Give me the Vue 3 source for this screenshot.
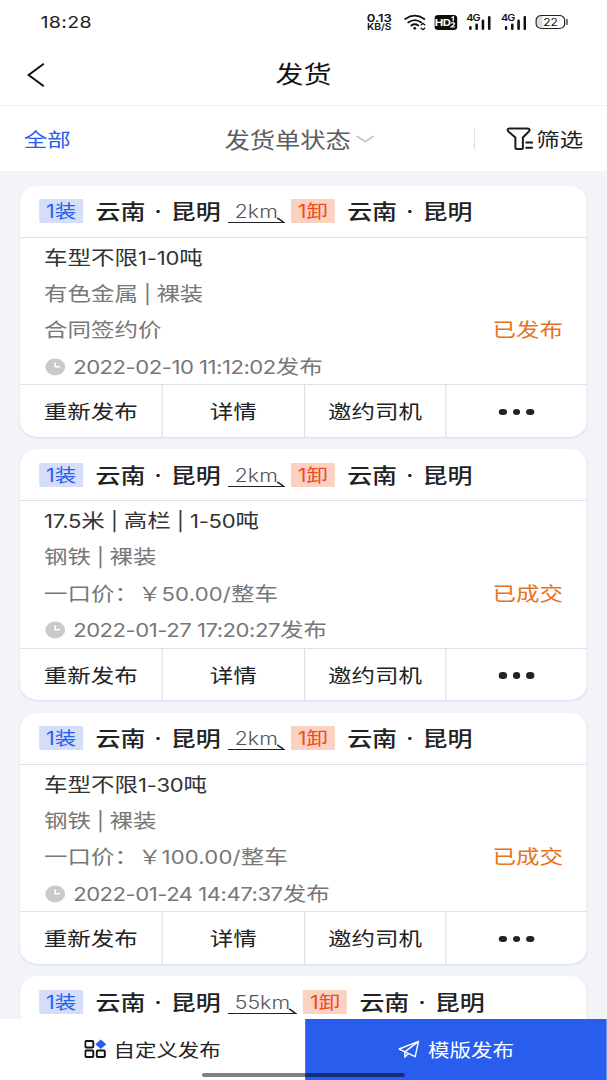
<template>
  <div class="screen">
    <!-- Status bar -->
    <div class="status-bar">
      <span class="clock">18:28</span>
      <div class="status-icons">
        <div class="speed"><span>0.13</span><span>KB/S</span></div>
        <svg class="wifi" viewBox="0 0 23 18" preserveAspectRatio="none">
          <g fill="none" stroke="#111" stroke-width="1.8" stroke-linecap="round">
            <path d="M1.500 6Q11 -0.600 20.500 6" />
            <path d="M4.500 9.400Q11 4.700 17.500 9.400" />
            <path d="M7.500 12.500Q11 10 14.500 12.500" />
          </g>
          <circle cx="11" cy="15.300" r="1.400" fill="#111" />
          <path d="M17 12.300l2.200-2 2.200 2M17 14.700l2.200 2 2.200-2" fill="none" stroke="#111" stroke-width="1.300" />
        </svg>
        <div class="hd">HD<svg viewBox="0 0 5 12">
          <path d="M1.200 1.700L2.700 0.700V5.300M0.900 7.300Q2.500 6 3.700 7.300 4 8.300 1 11H4.300" fill="none" stroke="#fff" stroke-width="1.100" />
        </svg></div>
        <div v-for="sim in 2" :key="sim" class="signal">
          <span>4G</span>
          <svg viewBox="0 0 22 14" preserveAspectRatio="none">
            <path d="M1.300 11.200v1.500M7.600 8.700v4M13.900 4.700v8M20.200 1.300v11.400" fill="none" stroke="#111" stroke-width="2.600" stroke-linecap="round" />
          </svg>
        </div>
        <div class="battery">22</div>
      </div>
    </div>

    <!-- Page header -->
    <header class="page-header">
      <svg class="back" viewBox="0 0 20 26" preserveAspectRatio="none">
        <path d="M17.500 1.800L2.500 13l15 11.200" fill="none" stroke="#111" stroke-width="2" />
      </svg>
      <h1>发货</h1>
    </header>

    <!-- Filters -->
    <div class="filters">
      <span class="filter-all">全部</span>
      <span class="filter-status">
        发货单状态
        <svg viewBox="0 0 20 10" preserveAspectRatio="none">
          <path d="M1.500 2L10 7.500 18.500 2" fill="none" stroke="#c3c8d0" stroke-width="1.900" />
        </svg>
      </span>
      <span class="filter-more">
        <svg viewBox="0 0 28 24" preserveAspectRatio="none">
          <path d="M3.500 1.500H21.500q3.500 0.500 1.500 3L17 10.500v10q0 1.500-1.500 1.500H11q-1.500 0-1.500-1.500v-10L2.500 4.500Q0.500 2 3.500 1.500z" fill="none" stroke="#1c1c1e" stroke-width="2" stroke-linejoin="round" />
          <path d="M19.500 15.500h7.500M19.500 20.700h7.500" stroke="#1c1c1e" stroke-width="2" />
        </svg>
        筛选
      </span>
    </div>

    <!-- Shipment list -->
    <main class="list">
      <section v-for="order in orders" :key="order.time" class="card">
        <div class="route">
          <span class="tag load">1装</span>
          <span class="place">云南<i>·</i>昆明</span>
          <span class="distance">
            {{ order.distance }}
            <svg viewBox="0 0 8 6" preserveAspectRatio="none">
              <path d="M0.500 0.800L6.500 5.200" stroke="#222" stroke-width="1.500" />
            </svg>
          </span>
          <span class="tag unload">1卸</span>
          <span class="place">云南<i>·</i>昆明</span>
        </div>
        <!-- Only the route is known until the order has been published -->
        <template v-if="order.time">
          <div class="details">
            <p class="vehicle">
              <span v-for="(part, i) in splitText(order.vehicle)" :key="i" :class="{ latin: i % 2 }">{{ part }}</span>
            </p>
            <p>
              <span v-for="(part, i) in splitText(order.goods)" :key="i" :class="{ latin: i % 2 }">{{ part }}</span>
            </p>
            <p class="price-row">
              <span v-if="order.price">一口价：￥<span class="latin">{{ order.price }}/</span>整车</span>
              <span v-else>合同签约价</span>
              <span class="state">{{ order.state }}</span>
            </p>
            <p class="time-row">
              <svg viewBox="0 0 20 18" preserveAspectRatio="none">
                <ellipse cx="10" cy="9" rx="9.800" ry="8.500" fill="#c9c9c9" />
                <path d="M10 4.500v4.300h4.700" fill="none" stroke="#fff" stroke-width="1.600" />
              </svg>
              <span><span class="latin">{{ order.time }}</span>发布</span>
            </p>
          </div>
          <div class="actions">
            <button>重新发布</button>
            <button>详情</button>
            <button>邀约司机</button>
            <button class="more"><i></i><i></i><i></i></button>
          </div>
        </template>
      </section>
    </main>

    <!-- Bottom actions -->
    <footer class="bottom-bar">
      <button class="custom">
        <svg viewBox="0 0 22 20" preserveAspectRatio="none">
          <g fill="none" stroke="#111" stroke-width="1.900">
            <rect x="1" y="2" width="8" height="6.500" rx="1" />
            <rect x="1" y="11.500" width="8" height="6.500" rx="1" />
            <rect x="12.500" y="11.500" width="8" height="6.500" rx="1" />
          </g>
          <path d="M16.500 0.500L22 5.200 16.500 9.900 11 5.200z" fill="#285dee" />
        </svg>
        自定义发布
      </button>
      <button class="template">
        <svg viewBox="0 0 24 20" preserveAspectRatio="none">
          <path d="M22 1.500L1.500 9.500l6 3L18.500 17.500zM22 1.500L7.500 12.500v5.500l3.500-3.500" fill="none" stroke="#fff" stroke-width="1.500" stroke-linejoin="round" />
        </svg>
        模版发布
      </button>
      <div class="home-indicator"></div>
    </footer>
  </div>
</template>

<script setup>
import { ref } from 'vue'

const orders = ref([
  {
    distance: '2km',
    vehicle: '车型不限1-10吨',
    goods: '有色金属 | 裸装',
    price: '',
    state: '已发布',
    time: '2022-02-10 11:12:02'
  },
  {
    distance: '2km',
    vehicle: '17.5米 | 高栏 | 1-50吨',
    goods: '钢铁 | 裸装',
    price: '50.00',
    state: '已成交',
    time: '2022-01-27 17:20:27'
  },
  {
    distance: '2km',
    vehicle: '车型不限1-30吨',
    goods: '钢铁 | 裸装',
    price: '100.00',
    state: '已成交',
    time: '2022-01-24 14:47:37'
  },
  {
    distance: '55km',
    vehicle: '',
    goods: '',
    price: '',
    state: '',
    time: ''
  }
])

// Odd parts are the latin ones, they get a slightly smaller font
const splitText = (text) => text.split(/([\x20-\x7e]+)/)
</script>

<style>
html,
body {
  margin: 0;
  overflow: hidden;
}
</style>

<style scoped>
/* The whole screen is widened, so horizontal sizes are in unscaled units */
.screen {
  width: calc(100vw / 1.1875);
  height: 1080px;
  display: flex;
  flex-direction: column;
  overflow: hidden;
  background: #f2f4f7;
  color: #222;
  font-family: Inter, "Noto Sans CJK SC", sans-serif;
  font-size: 19.8px;
  transform: scaleX(1.1875);
  transform-origin: 0 0;
}

button {
  border: 0;
  padding: 0;
  background: none;
  color: inherit;
  font: inherit;
}

svg {
  flex: none;
  display: block;
}

.latin {
  font-size: 18.6px;
  letter-spacing: -0.4px;
}

.status-bar {
  flex: none;
  height: 44px;
  padding: 0 35px 0 34px;
  display: flex;
  align-items: center;
  justify-content: space-between;
  background: #fff;
}

.clock {
  font-size: 16.5px;
  letter-spacing: 0.3px;
}

.status-icons {
  display: flex;
  align-items: center;
  color: #111;
}

.speed {
  display: flex;
  flex-direction: column;
  align-items: center;
  width: 22px;
  margin-right: 9.5px;
  font-weight: 600;
}

.speed span {
  font-size: 11px;
  line-height: 10px;
}

.speed span + span {
  font-size: 8.6px;
  line-height: 8px;
}

.wifi {
  width: 19.4px;
  height: 18px;
  margin-right: 6.5px;
}

.hd {
  display: flex;
  align-items: center;
  justify-content: center;
  width: 18.8px;
  height: 15px;
  margin-right: 8px;
  border-radius: 3px;
  background: #0c0c0c;
  color: #fff;
  font-size: 9.6px;
  font-weight: 700;
  letter-spacing: -0.6px;
}

.hd svg {
  width: 5px;
  height: 12px;
}

/* The network label sits over the two short bars */
.signal {
  position: relative;
  width: 21.3px;
  height: 16px;
  margin-right: 8px;
  display: flex;
  align-items: flex-end;
  justify-content: flex-end;
}

.signal span {
  position: absolute;
  left: 0;
  top: -1px;
  font-size: 9px;
  line-height: 10px;
  letter-spacing: -0.6px;
  font-weight: 600;
}

.signal svg {
  width: 18.5px;
  height: 14px;
}

.battery {
  position: relative;
  box-sizing: border-box;
  width: 25px;
  height: 14.5px;
  border: 1.4px solid #222;
  border-radius: 5px;
  background: linear-gradient(to right, #ddd 5px, #fff 5px);
  font-size: 10px;
  line-height: 12px;
  text-align: center;
}

.battery::after {
  content: "";
  position: absolute;
  right: -3px;
  top: 3px;
  width: 1.5px;
  height: 6px;
  border-radius: 1px;
  background: #222;
}

.page-header {
  flex: none;
  box-sizing: border-box;
  height: 62px;
  padding: 0 22px;
  display: grid;
  grid-template-columns: 17px 1fr 17px;
  align-items: center;
  background: #fff;
  border-bottom: 1px solid #f0f0f0;
}

.back {
  width: 17px;
  height: 26px;
}

h1 {
  margin: 0;
  font-size: 23.5px;
  font-weight: 400;
  line-height: 34px;
  text-align: center;
  color: #111;
}

.filters {
  flex: none;
  height: 65px;
  padding: 0 20px;
  display: flex;
  align-items: center;
  background: #fff;
}

.filter-all {
  width: 169px;
  color: #285dee;
}

.filter-status {
  flex: 1;
  display: flex;
  align-items: center;
  gap: 3px;
  font-size: 21.3px;
  color: #5c5c60;
}

.filter-status svg {
  width: 17px;
  height: 10px;
}

.filter-more {
  display: flex;
  align-items: center;
  gap: 2px;
}

.filter-more::before {
  content: "";
  width: 1px;
  height: 20px;
  margin-right: 24px;
  background: #dcdfe3;
}

.filter-more svg {
  width: 23.6px;
  height: 24px;
}

.list {
  flex: 1;
  min-height: 0;
  overflow: hidden;
  padding: 14.5px 16.8px 0;
}

.card {
  height: 251px;
  margin-bottom: 12.5px;
  background: #fff;
  border-radius: 15px;
  box-shadow: 0 1px 2px #d3dcf7;
}

.route {
  box-sizing: border-box;
  height: 52px;
  padding: 0 16px;
  display: flex;
  align-items: center;
  border-bottom: 1px solid #dfe1e4;
}

.tag {
  box-sizing: border-box;
  width: 37.3px;
  height: 24px;
  padding-top: 1px;
  line-height: 24px;
  font-size: 18px;
  text-align: center;
  border-radius: 1px;
}

.load {
  background: #d4def8;
  color: #285dee;
}

.unload {
  background: #fbd1c2;
  color: #f04a20;
}

.place {
  margin: -2px 0 0 10.3px;
  font-size: 21px;
  font-weight: 500;
  white-space: nowrap;
}

.place i {
  display: inline-block;
  width: 21.5px;
  text-align: center;
  font-style: normal;
}

.distance {
  position: relative;
  height: 22px;
  margin: 0 5px 0 6.5px;
  padding: 1px 5.8px 0 5.3px;
  line-height: 24px;
  font-size: 18px;
  font-weight: 300;
  color: #555;
  border-bottom: 1.5px solid #222;
}

.distance svg {
  position: absolute;
  right: 0;
  bottom: -1px;
  width: 7px;
  height: 6px;
}

.details {
  box-sizing: border-box;
  height: 147.5px;
  padding: 2px 20.3px 0;
  border-bottom: 1px solid #dfe1e4;
}

.details p {
  margin: 0;
  height: 36.4px;
  line-height: 36.4px;
  color: #777;
}

.details span {
  white-space: pre;
}

.details .vehicle {
  color: #333;
}

.vehicle .latin {
  letter-spacing: -0.2px;
}

.details .price-row {
  display: flex;
  justify-content: space-between;
}

.price-row .latin {
  letter-spacing: 0.15px;
}

.details .state {
  color: #e8731f;
}

.details .time-row {
  display: flex;
  align-items: center;
  gap: 7px;
}

.time-row svg {
  width: 17px;
  height: 18px;
  margin-left: 0.5px;
}

.actions {
  height: 51.5px;
  display: grid;
  grid-template-columns: repeat(4, 1fr);
}

.actions button + button {
  border-left: 1px solid #dfe1e4;
}

.more {
  display: flex;
  align-items: center;
  justify-content: center;
  gap: 5px;
  padding-top: 2px;
}

.more i {
  width: 6.5px;
  height: 6.5px;
  border-radius: 50%;
  background: #222;
}

.bottom-bar {
  flex: none;
  position: relative;
  height: 61px;
  display: grid;
  grid-template-columns: 257px 1fr;
  background: #fff;
  font-size: 18.1px;
}

.bottom-bar button {
  display: flex;
  align-items: center;
  justify-content: center;
  gap: 6px;
  padding-bottom: 1px;
}

.template {
  background: #285dee;
  color: #fff;
}

.custom svg {
  width: 18.5px;
  height: 20px;
}

.template svg {
  width: 19px;
  height: 19px;
}

.home-indicator {
  position: absolute;
  left: 170px;
  bottom: 3px;
  width: 171px;
  height: 4px;
  border-radius: 2px;
  background: rgba(0, 0, 0, 0.5);
}
</style>
